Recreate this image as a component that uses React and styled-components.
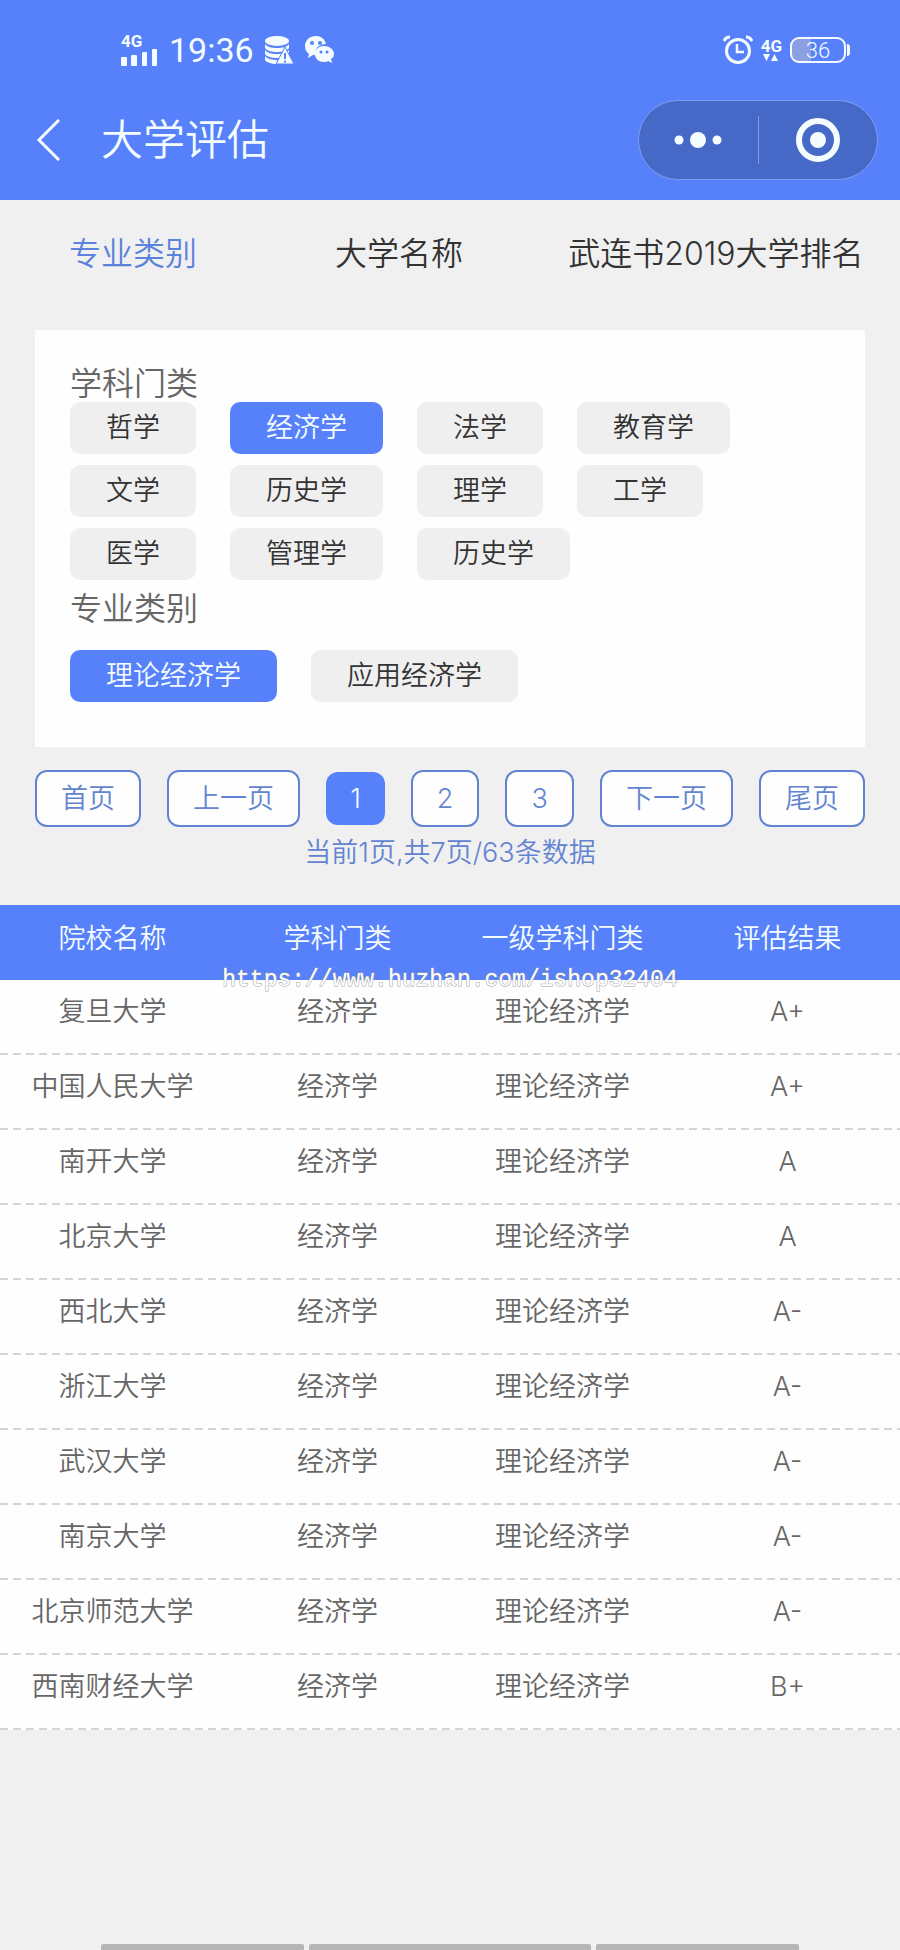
import { useState } from 'react';
import styled, { createGlobalStyle } from 'styled-components';

const GlobalStyle = createGlobalStyle`
  * {
    box-sizing: border-box;
  }
  body {
    margin: 0;
    background: #f1f0f1;
    color: #333;
    font-family: Inter, 'Noto Sans CJK SC', sans-serif;
    font-weight: 350;
  }
  button {
    border: 0;
    padding: 0;
    background: none;
    color: inherit;
    font: inherit;
    cursor: pointer;
  }
`;

const Page = styled.div`
  display: flex;
  flex-direction: column;
  min-height: 100vh;
`;

const Header = styled.header`
  background: #5781fb;
  color: #f4fcff;
  padding-bottom: 20px;
`;

const StatusBar = styled.div`
  display: flex;
  align-items: center;
  justify-content: space-between;
  height: 100px;
  padding: 0 50px 0 121px;
  font-family: Roboto, sans-serif;
`;

const StatusGroup = styled.div`
  display: flex;
  align-items: center;
  gap: ${(props) => props.$gap}px;
`;

const Network = styled.div`
  display: flex;
  flex-direction: column;
  align-items: ${(props) => (props.$center ? 'center' : 'flex-start')};
  font-size: 17px;
  line-height: 16px;
  font-weight: 700;
`;

const Clock = styled.time`
  font-size: 34px;
  line-height: 40px;
  font-weight: 400;
`;

const Battery = styled.div`
  display: flex;
  align-items: center;
`;

const BatteryBody = styled.div`
  width: 56px;
  height: 26px;
  border: 2px solid #f4fcff;
  border-radius: 9px;
  background: linear-gradient(to right, #8d9fe3 36%, transparent 36%);
  font-size: 22px;
  line-height: 23px;
  text-align: center;
`;

const BatteryTip = styled.div`
  width: 3px;
  height: 12px;
  margin-left: 1px;
  border-radius: 0 3px 3px 0;
  background: #f4fcff;
`;

const NavBar = styled.div`
  display: flex;
  align-items: center;
  height: 80px;
  padding: 0 22px 0 36px;
`;

const BackButton = styled.button`
  display: flex;
  width: 65px;
`;

const Title = styled.h1`
  flex: 1;
  margin: 0;
  font-size: 42px;
  line-height: 50px;
  font-weight: 350;
`;

const Capsule = styled.div`
  display: flex;
  align-items: center;
  width: 240px;
  height: 80px;
  border: 1px solid #7f9cf0;
  border-radius: 40px;
  background: #4668c6;
`;

const CapsuleButton = styled.button`
  display: flex;
  flex: 1;
  justify-content: center;
`;

const CapsuleLine = styled.div`
  width: 1px;
  height: 48px;
  background: #7f9cf0;
`;

const Tabs = styled.nav`
  display: grid;
  grid-template-columns: 266fr 266fr 368fr;
  height: 130px;
  padding-bottom: 22px;
`;

const Tab = styled.button`
  font-size: 32px;
  line-height: 36px;
  white-space: nowrap;
  color: ${(props) => (props.$active ? '#5b82dc' : '#333')};
`;

const Card = styled.section`
  margin: 0 35px;
  padding: 36px 35px 45px;
  background: #fefefe;
`;

const GroupTitle = styled.h2`
  margin: ${(props) => (props.$spaced ? '11px 0 23px' : '0')};
  color: #666;
  font-size: 32px;
  line-height: 36px;
  font-weight: 350;
`;

const Chips = styled.div`
  display: flex;
  flex-wrap: wrap;
  gap: 11px 34px;
`;

const Chip = styled.button`
  height: 52px;
  padding: 0 36px;
  border-radius: 10px;
  background: ${(props) => (props.$active ? '#5781fb' : '#f0eff0')};
  color: ${(props) => (props.$active ? '#f4fcff' : '#333')};
  font-size: 27px;
  line-height: 52px;
`;

const Pager = styled.nav`
  display: flex;
  align-items: center;
  justify-content: space-between;
  margin: 23px 35px 0;
`;

const PageButton = styled.button`
  height: ${(props) => (props.$active ? 53 : 57)}px;
  padding: 0 24px;
  border: ${(props) => (props.$active ? '0' : '2px solid #6284d0')};
  border-radius: 12px;
  background: ${(props) => (props.$active ? '#5781fb' : '#fefefe')};
  color: ${(props) => (props.$active ? '#f4fcff' : '#6284d0')};
  font-size: 27px;
  line-height: 52px;
`;

const PageInfo = styled.p`
  margin: 8px 0 34px;
  color: #6284d0;
  font-size: 27px;
  line-height: 36px;
  text-align: center;
`;

const TableWrap = styled.div`
  position: relative;
`;

const Table = styled.table`
  width: 100%;
  table-layout: fixed;
  border-collapse: separate;
  border-spacing: 0;
  background: #fefefe;
  color: #666;
  font-size: 27px;
  line-height: 36px;
  text-align: center;
`;

const HeadCell = styled.th`
  height: 75px;
  padding: 0 0 8px;
  background: #5781fb;
  color: #f4fcff;
  font-weight: 350;
`;

const Cell = styled.td`
  height: 75px;
  padding: 0 0 11px;
`;

const Row = styled.tr`
  background: repeating-linear-gradient(to right, #d5d5d5 0 8px, transparent 8px 13px) 0 100% / 100% 2px no-repeat;
`;

const Watermark = styled.div`
  position: absolute;
  top: 62px;
  left: 0;
  right: 0;
  color: #fff;
  font-family: 'Liberation Mono', monospace;
  font-size: 23px;
  line-height: 26px;
  font-weight: 400;
  text-align: center;
  -webkit-text-stroke: 1px #a0a0a0;
  paint-order: stroke fill;
  pointer-events: none;
`;

const SystemBar = styled.div`
  display: grid;
  grid-template-columns: 203fr 282fr 203fr;
  gap: 5px;
  margin: auto 101px 0;
`;

const SystemKey = styled.div`
  height: 6px;
  border-radius: 2px 2px 0 0;
  background: #b6b6b6;
`;

const SignalIcon = () => (
  <svg width="37" height="18" viewBox="0 0 37 18" fill="currentColor">
    <rect x="0" y="8" width="6" height="9" rx="1" />
    <rect x="10" y="6" width="6" height="11" rx="1" />
    <rect x="21" y="3" width="5" height="14" rx="1" />
    <rect x="31" y="0" width="5" height="17" rx="1" />
  </svg>
);

const StorageIcon = () => (
  <svg width="29" height="29" viewBox="0 0 29 29" fill="currentColor">
    <ellipse cx="12" cy="5" rx="12" ry="5" />
    <path d="M0 8c2 3 7 4 12 4s10-1 12-4v4c-2 3-7 4-12 4S2 15 0 12z" />
    <path d="M0 14c2 3 7 4 12 4s10-1 12-4v4c-2 3-7 4-12 4S2 21 0 18z" />
    <path d="M0 20c2 3 7 4 12 4v4C6 28 1 26 0 24z" />
    <path d="M20 11l9 17H11z" stroke="#5781fb" strokeWidth="1" />
    <path d="M20 17v6M20 24.500v2" stroke="#5781fb" strokeWidth="2" />
  </svg>
);

const ChatIcon = () => (
  <svg width="29" height="28" viewBox="0 0 29 28" fill="currentColor">
    <path d="M11 0C5 0 0 4 0 10c0 3 1 6 4 8l-1 4 5-3h4C8 13 14 8 21 8 20 3 16 0 11 0z" />
    <path d="M19 10c-5 0-9 3-9 8s4 8 9 8c2 0 3 0 4-1l4 2-1-4c2-1 3-3 3-5 0-5-5-8-10-8z" />
    <g fill="#5781fb">
      <circle cx="7" cy="7" r="2" />
      <circle cx="15" cy="7" r="2" />
      <circle cx="16" cy="16" r="1.500" />
      <circle cx="22" cy="16" r="1.500" />
    </g>
  </svg>
);

const AlarmIcon = () => (
  <svg width="30" height="30" viewBox="0 0 30 30" fill="none" stroke="currentColor">
    <circle cx="15" cy="16" r="11.500" strokeWidth="3" />
    <path d="M14 9v8h7" strokeWidth="2.500" />
    <path d="M1 6c1-2 3-4 6-4M29 6c-1-2-3-4-6-4" strokeWidth="3" />
  </svg>
);

const DataIcon = () => (
  <svg width="16" height="8" viewBox="0 0 16 8" fill="currentColor">
    <path d="M0 0h7L3.500 7zM8 7h7L11.500 0z" />
  </svg>
);

const BackIcon = () => (
  <svg width="26" height="42" viewBox="0 0 26 42" fill="none" stroke="currentColor" strokeWidth="3">
    <path d="M23 1L3 21l20 20" />
  </svg>
);

const MoreIcon = () => (
  <svg width="48" height="16" viewBox="0 0 48 16" fill="currentColor">
    <circle cx="5" cy="8" r="4.500" />
    <circle cx="24" cy="8" r="8" />
    <circle cx="43" cy="8" r="4.500" />
  </svg>
);

const CloseIcon = () => (
  <svg width="44" height="44" viewBox="0 0 44 44" fill="none" stroke="currentColor">
    <circle cx="22" cy="22" r="19" strokeWidth="6" />
    <circle cx="22" cy="22" r="8" fill="currentColor" stroke="none" />
  </svg>
);

const tabs = ['专业类别', '大学名称', '武连书2019大学排名'];

const subjects = [
  '哲学', '经济学', '法学', '教育学',
  '文学', '历史学', '理学', '工学',
  '医学', '管理学', '历史学',
];

const majors = ['理论经济学', '应用经济学'];

const pages = ['首页', '上一页', '1', '2', '3', '下一页', '尾页'];

const columns = ['院校名称', '学科门类', '一级学科门类', '评估结果'];

const schools = [
  { name: '复旦大学', grade: 'A+' },
  { name: '中国人民大学', grade: 'A+' },
  { name: '南开大学', grade: 'A' },
  { name: '北京大学', grade: 'A' },
  { name: '西北大学', grade: 'A-' },
  { name: '浙江大学', grade: 'A-' },
  { name: '武汉大学', grade: 'A-' },
  { name: '南京大学', grade: 'A-' },
  { name: '北京师范大学', grade: 'A-' },
  { name: '西南财经大学', grade: 'B+' },
];

export default function App() {
  const [tab, setTab] = useState(0);
  const [subject, setSubject] = useState(1);
  const [major, setMajor] = useState(0);

  return (
    <Page>
      <GlobalStyle />
      <Header>
        <StatusBar>
          <StatusGroup $gap={11}>
            <Network>
              4G
              <SignalIcon />
            </Network>
            <Clock>19:36</Clock>
            <StorageIcon />
            <ChatIcon />
          </StatusGroup>
          <StatusGroup $gap={8}>
            <AlarmIcon />
            <Network $center>
              4G
              <DataIcon />
            </Network>
            <Battery>
              <BatteryBody>36</BatteryBody>
              <BatteryTip />
            </Battery>
          </StatusGroup>
        </StatusBar>
        <NavBar>
          <BackButton aria-label="返回">
            <BackIcon />
          </BackButton>
          <Title>大学评估</Title>
          <Capsule>
            <CapsuleButton aria-label="更多">
              <MoreIcon />
            </CapsuleButton>
            <CapsuleLine />
            <CapsuleButton aria-label="关闭">
              <CloseIcon />
            </CapsuleButton>
          </Capsule>
        </NavBar>
      </Header>

      <Tabs>
        {tabs.map((name, i) => (
          <Tab key={name} $active={i === tab} onClick={() => setTab(i)}>
            {name}
          </Tab>
        ))}
      </Tabs>

      <Card>
        <GroupTitle>学科门类</GroupTitle>
        <Chips>
          {subjects.map((name, i) => (
            <Chip key={i} $active={i === subject} onClick={() => setSubject(i)}>
              {name}
            </Chip>
          ))}
        </Chips>
        <GroupTitle $spaced>专业类别</GroupTitle>
        <Chips>
          {majors.map((name, i) => (
            <Chip key={name} $active={i === major} onClick={() => setMajor(i)}>
              {name}
            </Chip>
          ))}
        </Chips>
      </Card>

      <Pager>
        {pages.map((name) => (
          <PageButton key={name} $active={name === '1'}>
            {name}
          </PageButton>
        ))}
      </Pager>
      <PageInfo>当前1页,共7页/63条数据</PageInfo>

      <TableWrap>
        <Table>
          <thead>
            <tr>
              {columns.map((name) => (
                <HeadCell key={name}>{name}</HeadCell>
              ))}
            </tr>
          </thead>
          <tbody>
            {schools.map((school) => (
              <Row key={school.name}>
                <Cell>{school.name}</Cell>
                <Cell>经济学</Cell>
                <Cell>理论经济学</Cell>
                <Cell>{school.grade}</Cell>
              </Row>
            ))}
          </tbody>
        </Table>
        <Watermark>https://www.huzhan.com/ishop32404</Watermark>
      </TableWrap>

      <SystemBar>
        <SystemKey />
        <SystemKey />
        <SystemKey />
      </SystemBar>
    </Page>
  );
}
